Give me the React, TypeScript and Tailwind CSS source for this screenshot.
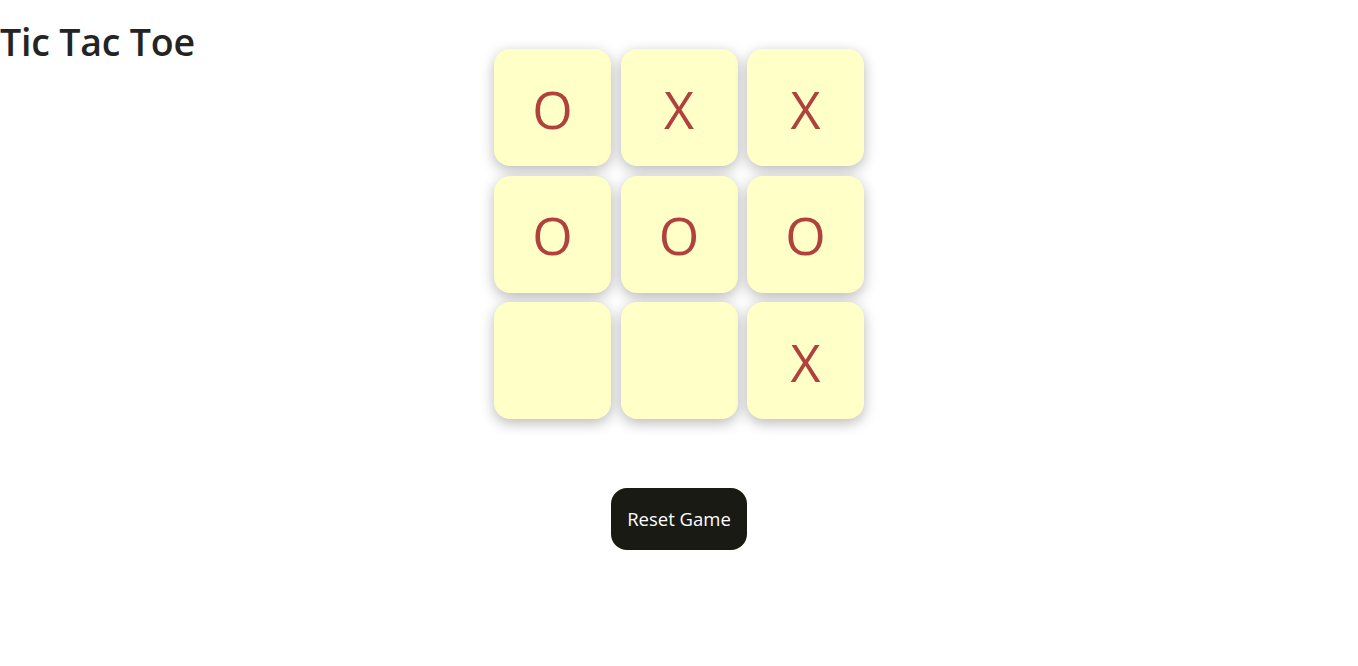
import { useState } from 'react';

type Mark = 'X' | 'O' | null;

const START: Mark[] = ['O', 'X', 'X', 'O', 'O', 'O', null, null, 'X'];

export default function App() {
  const [cells, setCells] = useState<Mark[]>(START);
  const [turn, setTurn] = useState<'X' | 'O'>('X');

  const play = (i: number) => {
    if (cells[i]) return;
    const next = [...cells];
    next[i] = turn;
    setCells(next);
    setTurn(turn === 'X' ? 'O' : 'X');
  };

  const reset = () => {
    setCells(Array(9).fill(null));
    setTurn('X');
  };

  return (
    <div className="min-h-screen bg-white font-['Open_Sans','Noto_Sans',sans-serif] text-[#213547]">
      <div className="grid grid-cols-[1fr_auto_1fr]">
        <h1 className="mt-[21px] text-[37.5px] font-semibold leading-[1.1] text-[#242424] tracking-[-0.2px]">Tic Tac Toe</h1>

        <div className="flex flex-col items-center pt-[49px]">
          {/* Board */}
          <div className="grid grid-cols-[117px_117px_117px] gap-x-[9.5px] gap-y-[9.5px]">
            {cells.map((c, i) => (
              <button
                key={i}
                onClick={() => play(i)}
                className="w-[117px] h-[117px] rounded-[16px] bg-[#ffffc8] shadow-[0_4px_14px_rgba(0,0,0,0.28)] flex items-center justify-center text-[52px] font-normal text-[#b0413c] leading-none pt-[2px]"
              >
                {c}
              </button>
            ))}
          </div>

          <button
            onClick={reset}
            className="mt-[69px] w-[136px] h-[62px] rounded-[16px] bg-[#1a1a15] text-white text-[18.5px] flex items-center justify-center"
          >
            Reset Game
          </button>
        </div>

        <div />
      </div>
    </div>
  );
}
